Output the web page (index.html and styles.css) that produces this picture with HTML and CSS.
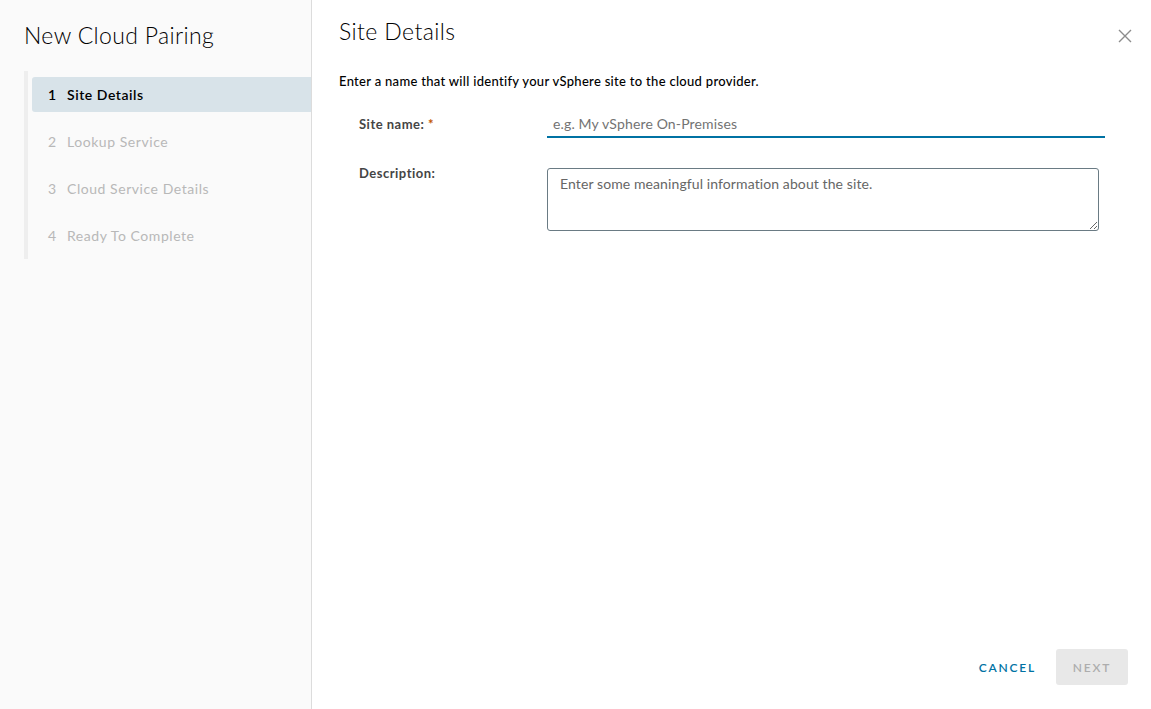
FILE: index.html
```html
<!DOCTYPE html>
<html>
<head>
<meta charset="utf-8">
<link rel="stylesheet" href="styles.css">
</head>
<body>
<div class="wizard">
  <aside class="sidebar">
    <h1 class="wizard-title">New Cloud Pairing</h1>
    <nav class="steps">
      <div class="step active"><span class="num">1</span><span>Site Details</span></div>
      <div class="step"><span class="num">2</span><span>Lookup Service</span></div>
      <div class="step"><span class="num">3</span><span>Cloud Service Details</span></div>
      <div class="step"><span class="num">4</span><span>Ready To Complete</span></div>
    </nav>
  </aside>
  <main class="content">
    <header class="content-head">
      <h2 class="page-title">Site Details</h2>
      <button class="close" aria-label="Close">
        <svg width="16" height="16" viewBox="0 0 16 16"><path d="M2 2 L14 14 M14 2 L2 14" stroke="#8c8c8c" stroke-width="1.4" fill="none"/></svg>
      </button>
    </header>
    <p class="intro">Enter a name that will identify your vSphere site to the cloud provider.</p>
    <form class="form">
      <div class="row">
        <label class="label">Site name: <span class="req">*</span></label>
        <div class="field"><input class="text-input" type="text" placeholder="e.g. My vSphere On-Premises"></div>
      </div>
      <div class="row row-desc">
        <label class="label">Description:</label>
        <div class="field"><textarea class="textarea" placeholder="Enter some meaningful information about the site."></textarea></div>
      </div>
    </form>
    <footer class="actions">
      <button class="btn-link" type="button">Cancel</button>
      <button class="btn-disabled" type="button">Next</button>
    </footer>
  </main>
</div>
</body>
</html>
```
FILE: styles.css
```css
* { box-sizing: border-box; }
html, body { margin: 0; padding: 0; }
body {
  width: 1151px;
  height: 709px;
  font-family: Lato, "Open Sans", sans-serif;
  color: #000;
  background: #fff;
  overflow: hidden;
}
.wizard {
  display: flex;
  height: 709px;
}
.sidebar {
  width: 312px;
  flex: none;
  background: #fafafa;
  border-right: 1px solid #dcdcdc;
  padding: 20px 0 0 24px;
}
.wizard-title {
  margin: 0;
  font-size: 23px;
  font-weight: 300;
  line-height: 30px;
  letter-spacing: 0.35px;
  color: #000;
}
.steps {
  margin-top: 21px;
  border-left: 4px solid #eeeeee;
  padding: 6px 0 6px 4px;
  display: flex;
  flex-direction: column;
  gap: 12px;
  width: 287px;
}
.step {
  height: 35px;
  display: flex;
  align-items: center;
  padding-left: 16px;
  font-size: 14px;
  letter-spacing: 0.55px;
  color: #b8b8b8;
  border-radius: 3px 0 0 3px;
}
.step .num {
  width: 19px;
  letter-spacing: 0;
}
.step.active {
  background: #d8e3e9;
  color: #000;
  font-weight: 600;
}
.content {
  flex: 1;
  position: relative;
  padding: 16px 18px 0 27px;
  display: flex;
  flex-direction: column;
}
.content-head {
  display: flex;
  justify-content: space-between;
  align-items: flex-start;
}
.page-title {
  margin: 0;
  font-size: 23px;
  font-weight: 300;
  line-height: 30px;
  letter-spacing: 0.4px;
}
.close {
  border: 0;
  background: none;
  padding: 0;
  margin-top: 12px;
  width: 16px;
  height: 16px;
  cursor: pointer;
}
.intro {
  margin: 27px 0 0 0;
  font-size: 13px;
  font-weight: 500;
  line-height: 16px;
  letter-spacing: 0.3px;
}
.form {
  margin-top: 23px;
  padding-left: 20px;
}
.row {
  display: flex;
  align-items: flex-start;
}
.label {
  width: 188px;
  flex: none;
  font-size: 13px;
  font-weight: 700;
  color: #454545;
  line-height: 24px;
  letter-spacing: 0.5px;
}
.req { color: #c25400; }
.field { flex: 1; }
.text-input {
  width: 558px;
  height: 26px;
  border: 0;
  border-bottom: 2px solid #0072a3;
  padding: 0 6px 2px 6px;
  font-family: inherit;
  font-size: 14px;
  letter-spacing: 0.15px;
  color: #000;
  background: transparent;
  outline: none;
}
.text-input::placeholder { color: #737373; }
.row-desc { margin-top: 29px; }
.row-desc .label { line-height: 12px; padding-top: 0; }
.textarea {
  display: block;
  width: 552px;
  height: 63px;
  border: 1px solid #6a7b84;
  border-radius: 3px;
  padding: 6px 12px;
  font-family: inherit;
  font-size: 14px;
  letter-spacing: 0.1px;
  resize: both;
  margin-top: 1px;
}
.textarea::placeholder { color: #666; }
.actions {
  margin-top: auto;
  display: flex;
  justify-content: flex-end;
  align-items: center;
  gap: 20px;
  padding: 0 5px 24px 0;
}
.btn-link, .btn-disabled {
  font-family: inherit;
  font-size: 12px;
  font-weight: 600;
  letter-spacing: 1.8px;
  text-transform: uppercase;
  border: 0;
  height: 36px;
  border-radius: 3px;
}
.btn-link {
  background: none;
  color: #0072a3;
  padding: 0 0;
}
.btn-disabled {
  background: #e8e8e8;
  color: #adadad;
  width: 72px;
}
```
